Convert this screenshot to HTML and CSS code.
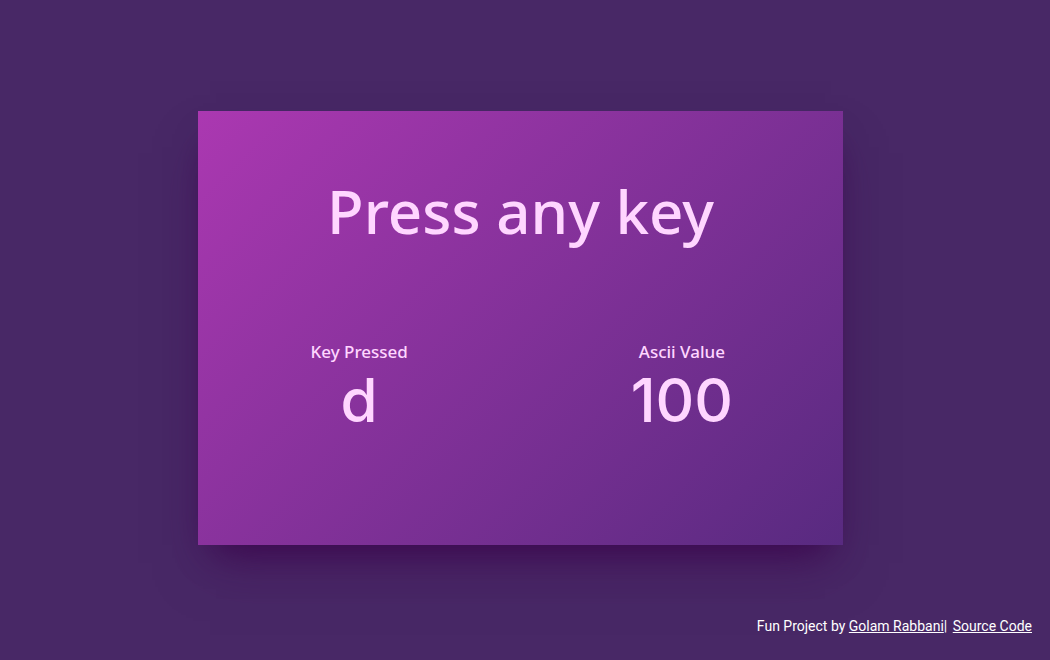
FILE: index.html
```html
<!DOCTYPE html>
<html lang="en">
<head>
<meta charset="utf-8">
<title>Press any key</title>
<link rel="stylesheet" href="styles.css">
</head>
<body>
<main class="stage">
  <section class="card">
    <h1 class="title">Press any key</h1>
    <div class="results">
      <div class="result">
        <h2 class="label">Key Pressed</h2>
        <p class="value">d</p>
      </div>
      <div class="result">
        <h2 class="label">Ascii Value</h2>
        <p class="value">100</p>
      </div>
    </div>
  </section>
</main>
<footer class="credit">Fun Project by <a href="#">Golam Rabbani</a>| <a class="source" href="#">Source Code</a></footer>
</body>
</html>
```
FILE: styles.css
```css
* {
  box-sizing: border-box;
  margin: 0;
}

body {
  min-height: 100vh;
  display: flex;
  flex-direction: column;
  background: #482866;
  color: #ffd6ff;
  font-family: "Noto Sans", "Open Sans", sans-serif;
}

.stage {
  flex: 1;
  display: flex;
  justify-content: center;
  align-items: flex-end;
  padding-right: 9px;
}

.card {
  width: 62%;
  margin-bottom: 71px;
  padding: 55px 0 109px;
  background: linear-gradient(135deg, #ab38b1, #582a80);
  box-shadow: 0 30px 48px -12px rgba(70, 10, 85, 0.5), 0 18px 36px -18px #300045;
  text-align: center;
}

.title {
  font-size: 60px;
  font-weight: 500;
  line-height: 90px;
}

.results {
  display: grid;
  grid-template-columns: 1fr 1fr;
  margin-top: 84px;
}

.label {
  font-size: 17px;
  font-weight: 500;
  line-height: 24px;
}

.value {
  font-family: "Inter", sans-serif;
  font-size: 60px;
  font-weight: 500;
  line-height: 72px;
}

.credit {
  padding: 0 18px 24px;
  color: #fff;
  font-family: "Roboto", sans-serif;
  font-size: 14px;
  line-height: 20px;
  text-align: right;
}

.credit a {
  color: inherit;
}

.source {
  margin-left: 2px;
}
```
